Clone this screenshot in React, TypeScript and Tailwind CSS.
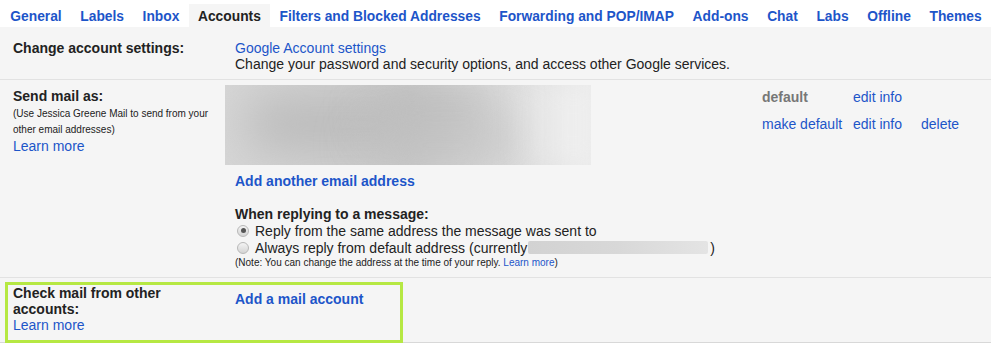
const tabs = [
  'General',
  'Labels',
  'Inbox',
  'Accounts',
  'Filters and Blocked Addresses',
  'Forwarding and POP/IMAP',
  'Add-ons',
  'Chat',
  'Labs',
  'Offline',
  'Themes',
]

function Radio({ checked }: { checked?: boolean }) {
  return (
    <span className="mr-[6px] inline-flex h-[12px] w-[12px] shrink-0 items-center justify-center rounded-full border border-[#b8b8b8] bg-gradient-to-b from-[#f4f4f4] to-[#d4d4d4]">
      {checked ? <span className="h-[5px] w-[5px] rounded-full bg-[#555]" /> : null}
    </span>
  )
}

export default function App() {
  return (
    <div className="h-[345px] w-[991px] overflow-hidden bg-white font-['Liberation_Sans',Arial,sans-serif] text-[14px] leading-[16px] text-[#222]">
      {/* tabs */}
      <div className="flex h-[27px] items-end whitespace-nowrap pl-[1px] text-[13.8px]">
        {tabs.map((tab) => (
          <div
            key={tab}
            className={
              tab === 'Accounts'
                ? 'flex h-[23px] shrink-0 items-center bg-[#f5f5f5] px-[9.3px] pt-[2px] font-bold text-[#222]'
                : 'flex h-[23px] shrink-0 items-center px-[9.3px] pt-[2px] font-bold text-[#1d55c9]'
            }
          >
            {tab}
          </div>
        ))}
      </div>

      <div className="bg-[#f5f5f5]">
        {/* change account settings */}
        <div className="grid h-[53px] grid-cols-[235px_1fr] border-b border-[#e2e2e2] pt-[13px]">
          <div className="pl-[13px] font-bold">Change account settings:</div>
          <div>
            <div className="text-[#1d55c9]">Google Account settings</div>
            <div>Change your password and security options, and access other Google services.</div>
          </div>
        </div>

        {/* send mail as */}
        <div className="grid h-[198px] grid-cols-[235px_1fr] border-b border-[#e2e2e2]">
          <div className="pl-[13px] pt-[8px]">
            <div className="font-bold">Send mail as:</div>
            <div className="mt-[2px] text-[10px] leading-[16px]">
              (Use Jessica Greene Mail to send from your
              <br />
              other email addresses)
            </div>
            <div className="text-[#1d55c9]">Learn more</div>
          </div>
          <div>
            <div className="flex">
              <div className="w-[527px] pt-[5px]">
                <div className="relative -ml-[10px] h-[80px] w-[366px] overflow-hidden bg-gradient-to-r from-[#d6d6d6] via-[#cdcdcd] to-[#ebebeb]">
                  <div className="absolute left-[20px] top-[14px] h-[50px] w-[200px] rounded-full bg-[#b9b9b9] blur-xl" />
                  <div className="absolute left-[150px] top-[8px] h-[40px] w-[120px] rounded-full bg-[#bdbdbd] blur-xl" />
                  <div className="absolute left-[140px] top-[45px] h-[30px] w-[160px] rounded-full bg-[#c3c3c3] blur-xl" />
                  <div className="absolute right-0 top-0 h-[80px] w-[80px] bg-gradient-to-r from-transparent to-[#f0f0f0] blur-md" />
                </div>
              </div>
              <div className="grid grid-cols-[91px_68px_auto] content-start gap-y-[11px] pt-[9px]">
                <div className="font-bold text-[#777]">default</div>
                <div className="text-[#1d55c9]">edit info</div>
                <div />
                <div className="text-[#1d55c9]">make default</div>
                <div className="text-[#1d55c9]">edit info</div>
                <div className="text-[#1d55c9]">delete</div>
              </div>
            </div>
            <div className="mt-[8px] font-bold text-[#1d55c9]">Add another email address</div>
            <div className="mt-[17px] font-bold">When replying to a message:</div>
            <div className="flex h-[17px] items-center pl-[2px]">
              <Radio checked />
              Reply from the same address the message was sent to
            </div>
            <div className="flex h-[17px] items-center pl-[2px]">
              <Radio />
              Always reply from default address (currently
              <span className="ml-[1px] mr-[2px] inline-block h-[13px] w-[180px] rounded-[2px] bg-gradient-to-r from-[#d2d2d2] via-[#d8d8d8] to-[#e4e4e4]" />)
            </div>
            <div className="text-[10px] leading-[14px]">
              (Note: You can change the address at the time of your reply.{' '}
              <span className="text-[#1d55c9]">Learn more</span>)
            </div>
          </div>
        </div>

        {/* check mail from other accounts */}
        <div className="h-[65px] border-b border-[#d8d8d8] px-[5px] pt-[4px]">
          <div className="grid h-[61px] w-[398px] grid-cols-[227px_1fr] border-[3px] border-[#b6e843]">
            <div className="pl-[5px]">
              <div className="max-w-[165px] font-bold">Check mail from other accounts:</div>
              <div className="text-[#1d55c9]">Learn more</div>
            </div>
            <div className="pt-[6px] font-bold text-[#1d55c9]">Add a mail account</div>
          </div>
        </div>
      </div>
    </div>
  )
}
